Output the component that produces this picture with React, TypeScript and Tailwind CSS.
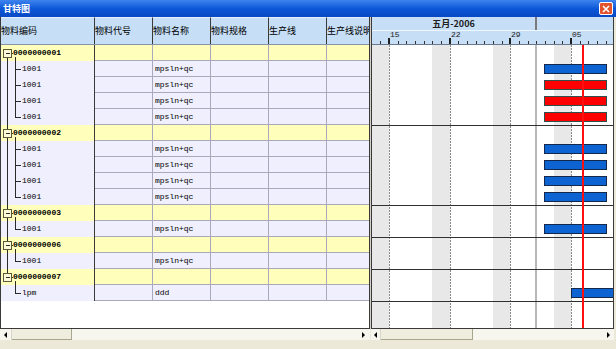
import React from "react";

type Bar = { kind: "blue" | "red"; x1: number; x2: number };
type Item = { code: string; name: string; bar?: Bar };
type Group = { code: string; items: Item[] };

const blue: Bar = { kind: "blue", x1: 172, x2: 234 };
const red: Bar = { kind: "red", x1: 172, x2: 234 };

const groups: Group[] = [
  {
    code: "0000000001",
    items: [
      { code: "1001", name: "mpsln+qc", bar: blue },
      { code: "1001", name: "mpsln+qc", bar: red },
      { code: "1001", name: "mpsln+qc", bar: red },
      { code: "1001", name: "mpsln+qc", bar: red },
    ],
  },
  {
    code: "0000000002",
    items: [
      { code: "1001", name: "mpsln+qc", bar: blue },
      { code: "1001", name: "mpsln+qc", bar: blue },
      { code: "1001", name: "mpsln+qc", bar: blue },
      { code: "1001", name: "mpsln+qc", bar: blue },
    ],
  },
  { code: "0000000003", items: [{ code: "1001", name: "mpsln+qc", bar: blue }] },
  { code: "0000000006", items: [{ code: "1001", name: "mpsln+qc" }] },
  {
    code: "0000000007",
    items: [{ code: "lpm", name: "ddd", bar: { kind: "blue", x1: 199, x2: 246 } }],
  },
];

const columns = [
  { label: "物料编码", w: "w-[94px]" },
  { label: "物料代号", w: "w-[58px]" },
  { label: "物料名称", w: "w-[58px]" },
  { label: "物料规格", w: "w-[58px]" },
  { label: "生产线", w: "w-[58px]" },
  { label: "生产线说明", w: "flex-1" },
];

const cjk = "font-['Noto_Sans_CJK_SC',sans-serif]";
const mono = "font-['Liberation_Mono','Noto_Sans_CJK_SC',monospace]";

// gantt scale: May 15 sits at x=17 of the canvas, one day = 8.667px
const DAY = 60.67 / 7;
const T0 = 17;
const dayX = (d: number) => T0 + d * DAY;
const CW = 241;
const CH = 283;
const ROW = 16;

const majors = [
  { d: 0, label: "15" },
  { d: 7, label: "22" },
  { d: 14, label: "29" },
  { d: 21, label: "05" },
];
const weekends = [-2, 5, 12, 19];
const monthLine = dayX(17);
const today = 211;

function TreeLines({
  kind,
  firstGroup,
  lastGroup,
  lastItem,
}: {
  kind: "group" | "item";
  firstGroup: boolean;
  lastGroup: boolean;
  lastItem?: boolean;
}) {
  return (
    <svg className="absolute left-0 top-0" width="24" height="16" shapeRendering="crispEdges">
      {kind === "group" ? (
        <g stroke="#2b2b2b" strokeWidth="1">
          {!firstGroup && <line x1="6.5" y1="0" x2="6.5" y2="4" />}
          {!lastGroup && <line x1="6.5" y1="12" x2="6.5" y2="16" />}
          <rect x="2.5" y="4.5" width="8" height="8" fill="#fffbd8" stroke="#5a5a3a" />
          <line x1="4.5" y1="8.5" x2="8.5" y2="8.5" />
          <line x1="10.5" y1="8.5" x2="12" y2="8.5" />
          <line x1="14.5" y1="12" x2="14.5" y2="16" />
        </g>
      ) : (
        <g stroke="#2b2b2b" strokeWidth="1">
          {!lastGroup && <line x1="6.5" y1="0" x2="6.5" y2="16" />}
          <line x1="14.5" y1="0" x2="14.5" y2={lastItem ? 8.5 : 16} />
          <line x1="14.5" y1="8.5" x2="20" y2="8.5" />
        </g>
      )}
    </svg>
  );
}

function GridRow({
  group,
  first,
  cells,
  tree,
}: {
  group: boolean;
  first: string;
  cells: string[];
  tree: React.ReactNode;
}) {
  const bg = group ? "bg-[#ffffbb]" : "bg-[#efeffd]";
  return (
    <div className={`flex h-[16px] ${bg}`}>
      <div
        className={`relative flex w-[94px] items-center border-r border-[#3a3a3a] text-[8px] leading-[16px] text-black ${mono} ${
          group ? "pl-[12px] font-bold" : "pl-[21px]"
        }`}
      >
        {tree}
        <span className="relative">{first}</span>
      </div>
      {cells.map((c, i) => (
        <div
          key={i}
          className={`${i === 4 ? "flex-1" : "w-[58px] border-r border-[#3a3a3a]"} border-b border-[#a9a9bb] pl-[2px] text-[8px] leading-[15px] text-black ${mono}`}
        >
          {c}
        </div>
      ))}
    </div>
  );
}

function Arrow({ dir }: { dir: "left" | "right" }) {
  return (
    <svg width="4" height="6">
      <polygon points={dir === "left" ? "3,0 3,6 0,3" : "0,0 0,6 3,3"} fill="#000" />
    </svg>
  );
}

function HScroll({ btn, thumb }: { btn: string; thumb: string }) {
  return (
    <div className="flex h-full bg-[#f6f5ee]">
      <div className={`${btn} flex items-center justify-center border-r border-[#d8d6c8]`}>
        <Arrow dir="left" />
      </div>
      <div className={`${thumb} border-b border-r border-[#a9a690] bg-[#efedde]`} />
      <div className="flex-1" />
      <div className={`${btn} flex items-center justify-center`}>
        <Arrow dir="right" />
      </div>
    </div>
  );
}

export default function App() {
  const rows: { y: number; bar?: Bar }[] = [];
  const seps: number[] = [];
  let r = 0;
  groups.forEach((g) => {
    rows.push({ y: r * ROW });
    r++;
    g.items.forEach((it) => {
      rows.push({ y: r * ROW, bar: it.bar });
      r++;
    });
    seps.push(r * ROW);
  });

  const minors: number[] = [];
  for (let d = -1; dayX(d) < CW; d++) minors.push(dayX(d));

  return (
    <div className={`flex h-[349px] w-[616px] flex-col overflow-hidden bg-[#ece9d8] ${cjk}`}>
      {/* title bar */}
      <div className="flex h-[17px] items-center justify-between bg-linear-to-b from-[#3d84ee] via-[#0c58d8] to-[#0848c4] pl-[3px] pr-[3px]">
        <span className="text-[9px] font-bold leading-none text-white">甘特图</span>
        <div className="flex h-[13px] w-[14px] items-center justify-center rounded-[2px] border border-white bg-[#e2532e]">
          <svg width="8" height="8">
            <path d="M1 1 L7 7 M7 1 L1 7" stroke="#fff" strokeWidth="1.6" />
          </svg>
        </div>
      </div>

      {/* panels */}
      <div className="flex h-[312px]">
        <div className="flex w-[370px] flex-col overflow-hidden border-b border-l border-r border-[#3a3a3a] bg-white">
          <div className="flex h-[28px] border-b border-[#8496aa] bg-[#c6def6]">
            {columns.map((c, i) => (
              <div
                key={c.label}
                className={`${c.w} flex items-center overflow-hidden whitespace-nowrap ${i < 5 ? "border-r border-[#3a3a3a]" : ""} border-t border-t-[#e4f0fc] text-[9px] text-black`}
              >
                {c.label}
              </div>
            ))}
          </div>
          {groups.map((g, gi) => (
            <React.Fragment key={g.code}>
              <GridRow
                group
                first={g.code}
                cells={["", "", "", "", ""]}
                tree={<TreeLines kind="group" firstGroup={gi === 0} lastGroup={gi === groups.length - 1} />}
              />
              {g.items.map((it, ii) => (
                <GridRow
                  key={ii}
                  group={false}
                  first={it.code}
                  cells={["", it.name, "", "", ""]}
                  tree={
                    <TreeLines
                      kind="item"
                      firstGroup={gi === 0}
                      lastGroup={gi === groups.length - 1}
                      lastItem={ii === g.items.length - 1}
                    />
                  }
                />
              ))}
            </React.Fragment>
          ))}
          <div className="flex-1 bg-white" />
        </div>

        <div className="w-[1px] bg-[#d4d0c8]" />

        <div className="flex w-[243px] flex-col overflow-hidden border-b border-l border-r border-[#3a3a3a] bg-white">
          {/* gantt header */}
          <div className="flex h-[14px] border-b border-[#eef6ff] bg-[#c6def6]">
            <div className="flex w-[163px] items-center justify-center text-[9px] font-bold text-[#202020]">
              五月-2006
            </div>
            <div className="w-[2px] bg-[#7a7a7a]" />
            <div className="flex-1" />
          </div>
          <div className="relative h-[14px] border-b border-[#6a7a8c] bg-[#c6def6]">
            <svg className="absolute left-0 top-0" width={CW} height="13" shapeRendering="crispEdges">
              {minors.map((x, i) => (
                <line key={i} x1={Math.round(x) + 0.5} y1="10" x2={Math.round(x) + 0.5} y2="13" stroke="#303030" />
              ))}
              {majors.map((m) => (
                <rect key={m.d} x={Math.round(dayX(m.d)) - 1} y="7" width="2" height="6" fill="#202020" />
              ))}
            </svg>
            {majors.map((m) => (
              <span
                key={m.d}
                className={`absolute top-[-1px] text-[8px] leading-[10px] text-[#202020] ${mono}`}
                style={{ left: Math.round(dayX(m.d)) + 1 }}
              >
                {m.label}
              </span>
            ))}
          </div>

          {/* gantt body */}
          <svg width={CW} height={CH} shapeRendering="crispEdges">
            <rect x="0" y="0" width={CW} height={CH} fill="#fff" />
            {weekends.map((d) => (
              <rect key={d} x={dayX(d)} y="0" width={DAY * 2} height={CH} fill="#e8e8e8" />
            ))}
            {majors.map((m) => (
              <line
                key={m.d}
                x1={Math.round(dayX(m.d)) + 0.5}
                y1="0"
                x2={Math.round(dayX(m.d)) + 0.5}
                y2={CH}
                stroke="#8a8a8a"
                strokeDasharray="2 1"
              />
            ))}
            <rect x={Math.round(monthLine) - 1} y="0" width="2" height={CH} fill="#b8b8b8" />
            {seps.map((y) => (
              <line key={y} x1="0" y1={y + 0.5} x2={CW} y2={y + 0.5} stroke="#303030" />
            ))}
            {rows.map((row, i) =>
              row.bar ? (
                <rect
                  key={i}
                  x={row.bar.x1 + 0.5}
                  y={row.y + 3.5}
                  width={row.bar.x2 - row.bar.x1}
                  height="9"
                  fill={row.bar.kind === "blue" ? "#0d63d2" : "#ff0000"}
                  stroke={row.bar.kind === "blue" ? "#14284a" : "#2f4f4f"}
                />
              ) : null
            )}
            <rect x={today - 1} y="0" width="2" height={CH} fill="#ff1010" />
          </svg>
        </div>
      </div>

      {/* scrollbars */}
      <div className="flex h-[11px]">
        <div className="w-[370px]">
          <HScroll btn="w-[12px]" thumb="w-[60px]" />
        </div>
        <div className="w-[1px]" />
        <div className="w-[243px]">
          <HScroll btn="w-[10px]" thumb="w-[92px]" />
        </div>
      </div>
      <div className="flex-1 bg-[#ece9d8]" />
    </div>
  );
}
